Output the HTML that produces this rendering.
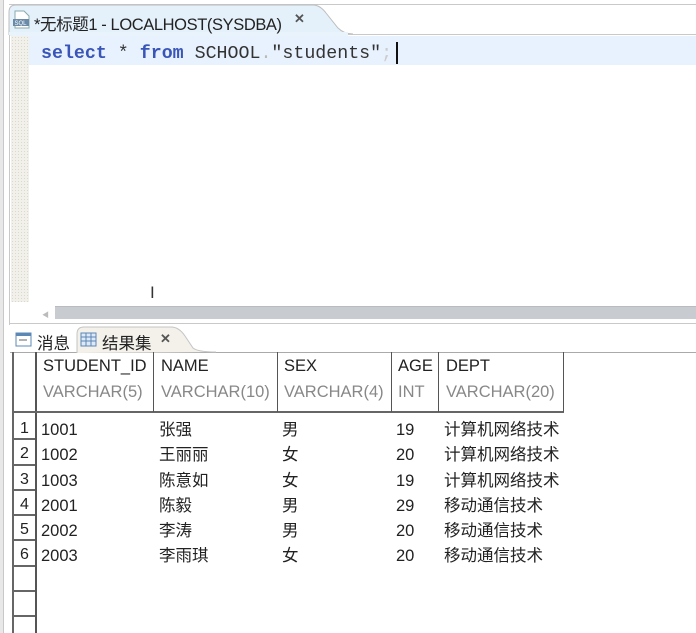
<!DOCTYPE html>
<html><head><meta charset="utf-8"><style>
*{margin:0;padding:0;box-sizing:border-box}
body{width:696px;height:633px;overflow:hidden;background:#fff;position:relative;font-family:"Liberation Sans","Noto Sans CJK SC",sans-serif;color:#222}
.abs{position:absolute}
.rn{height:25.3px;border-bottom:2px solid #666;font-size:16px;text-align:center;padding-top:5px}
</style></head><body>
<div class="abs" style="left:0;top:0;width:3px;height:633px;background:#e8e8e8"></div>
<div class="abs" style="left:3px;top:0;width:1px;height:633px;background:#c8c8c8"></div>
<div class="abs" style="left:9px;top:4px;width:687px;height:1px;background:#c9c9c9"></div>
<div class="abs" style="left:9px;top:34px;width:687px;height:1px;background:#c9c9c9"></div>
<svg class="abs" style="left:8px;top:4px" width="345" height="32"><path d="M1 31 V8 Q1 1 8 1 H305 Q312 1 318 9 L330 24 Q336 30 345 30" fill="#e4f1fb" stroke="#bdbdbd"/><rect x="1" y="28" width="339" height="4" fill="#e8f3fc"/></svg>
<svg class="abs" style="left:12px;top:10px" width="20" height="20"><path d="M3 1 H12 L17 6 V18 H3 Z" fill="#fff" stroke="#8aa"/><rect x="1" y="9" width="16" height="7" fill="#6a8aa8"/><text x="2.5" y="15" font-size="6" fill="#fff" font-family="Liberation Sans">SQL</text></svg>
<div class="abs" style="left:34px;top:11px;font-size:16.5px;color:#222;letter-spacing:-0.4px;white-space:nowrap">*无标题1 - LOCALHOST(SYSDBA)</div>
<div class="abs" style="left:294px;top:11px;font-size:13px;color:#555;font-weight:bold">✕</div>
<div class="abs" style="left:9px;top:35px;width:1px;height:290px;background:#c9c9c9"></div>
<div class="abs" style="left:11px;top:36px;width:18px;height:266px;background:#f2f0ea;background-image:radial-gradient(#ddd8cc 0.6px,transparent 0.7px);background-size:3px 3px"></div>
<div class="abs" style="left:29px;top:36px;width:667px;height:29px;background:#e8f2fe"></div>
<div class="abs" style="left:41px;top:44px;font-family:'Liberation Mono',monospace;font-size:18.3px;white-space:pre;color:#333"><b style="color:#3a55b8">select</b> * <b style="color:#3a55b8">from</b> SCHOOL<span style="color:#bbb">.</span>"students"<span style="color:#ccc">;</span></div>
<div class="abs" style="left:396px;top:42px;width:2px;height:22px;background:#111"></div>
<div class="abs" style="left:150px;top:283px;font-size:17px;color:#333">I</div>
<div class="abs" style="left:42px;top:310px;font-size:7px;color:#bbb">◀</div>
<div class="abs" style="left:55px;top:306px;width:641px;height:13px;background:#c8ccd0;border-top:1px solid #b8bcc0"></div>
<div class="abs" style="left:10px;top:323px;width:686px;height:1px;background:#c9c9c9"></div>
<div class="abs" style="left:10px;top:352px;width:686px;height:1px;background:#aaa"></div>
<svg class="abs" style="left:11px;top:324px" width="220" height="30"><path d="M66 29 V10 Q66 3 73 3 H160 Q168 3 174 12 L182 24 Q187 28 205 28" fill="#f3f1ea" stroke="#c4c4c4"/></svg>
<svg class="abs" style="left:15px;top:332px" width="18" height="16"><rect x="1" y="1" width="15" height="13" fill="#fff" stroke="#5b88b5"/><rect x="1" y="1" width="15" height="3" fill="#5b88b5"/><line x1="4" y1="8" x2="12" y2="8" stroke="#666"/></svg>
<div class="abs" style="left:37px;top:330px;font-size:16.5px">消息</div>
<svg class="abs" style="left:80px;top:332px" width="18" height="16"><rect x="1" y="1" width="15" height="13" fill="#dde9f6" stroke="#5b88b5"/><path d="M1 5H16M1 9H16M6 1V14M11 1V14" stroke="#5b88b5"/></svg>
<div class="abs" style="left:102px;top:330px;font-size:16.5px">结果集</div>
<div class="abs" style="left:160px;top:331px;font-size:13px;color:#555;font-weight:bold">✕</div>
<div class="abs" style="left:12px;top:352px;width:2px;height:281px;background:#666"></div>
<div class="abs" style="left:35px;top:352px;width:2px;height:281px;background:#555"></div>
<div class="abs" style="left:12px;top:411px;width:552px;height:2px;background:#666"></div>
<div class="abs" style="left:153px;top:352px;width:1px;height:60px;background:#555"></div>
<div class="abs" style="left:277px;top:352px;width:1px;height:60px;background:#555"></div>
<div class="abs" style="left:391px;top:352px;width:1px;height:60px;background:#555"></div>
<div class="abs" style="left:438px;top:352px;width:1px;height:60px;background:#555"></div>
<div class="abs" style="left:563px;top:352px;width:1px;height:60px;background:#555"></div>
<div class="abs" style="font-size:16.5px;top:357px;left:43px">STUDENT_ID</div>
<div class="abs" style="font-size:16.5px;top:357px;left:161px">NAME</div>
<div class="abs" style="font-size:16.5px;top:357px;left:284px">SEX</div>
<div class="abs" style="font-size:16.5px;top:357px;left:398px">AGE</div>
<div class="abs" style="font-size:16.5px;top:357px;left:446px">DEPT</div>
<div class="abs" style="font-size:16.5px;top:383px;left:43px;color:#888">VARCHAR(5)</div>
<div class="abs" style="font-size:16.5px;top:383px;left:161px;color:#888">VARCHAR(10)</div>
<div class="abs" style="font-size:16.5px;top:383px;left:284px;color:#888">VARCHAR(4)</div>
<div class="abs" style="font-size:16.5px;top:383px;left:398px;color:#888">INT</div>
<div class="abs" style="font-size:16.5px;top:383px;left:446px;color:#888">VARCHAR(20)</div>
<div style="position:absolute;left:14px;top:415px;width:21px">
<div class="rn">1</div><div class="rn">2</div><div class="rn">3</div><div class="rn">4</div><div class="rn">5</div><div class="rn">6</div><div class="rn"></div><div class="rn"></div>
</div>
<div style="position:absolute;left:0;top:418px;font-size:16.5px;line-height:25.3px">
<div style="position:absolute;left:41px;white-space:nowrap">1001<br>1002<br>1003<br>2001<br>2002<br>2003</div>
<div style="position:absolute;left:159px;white-space:nowrap">张强<br>王丽丽<br>陈意如<br>陈毅<br>李涛<br>李雨琪</div>
<div style="position:absolute;left:282px;white-space:nowrap">男<br>女<br>女<br>男<br>男<br>女</div>
<div style="position:absolute;left:396px;white-space:nowrap">19<br>20<br>19<br>29<br>20<br>20</div>
<div style="position:absolute;left:444px;white-space:nowrap">计算机网络技术<br>计算机网络技术<br>计算机网络技术<br>移动通信技术<br>移动通信技术<br>移动通信技术</div>
</div>
</body></html>
